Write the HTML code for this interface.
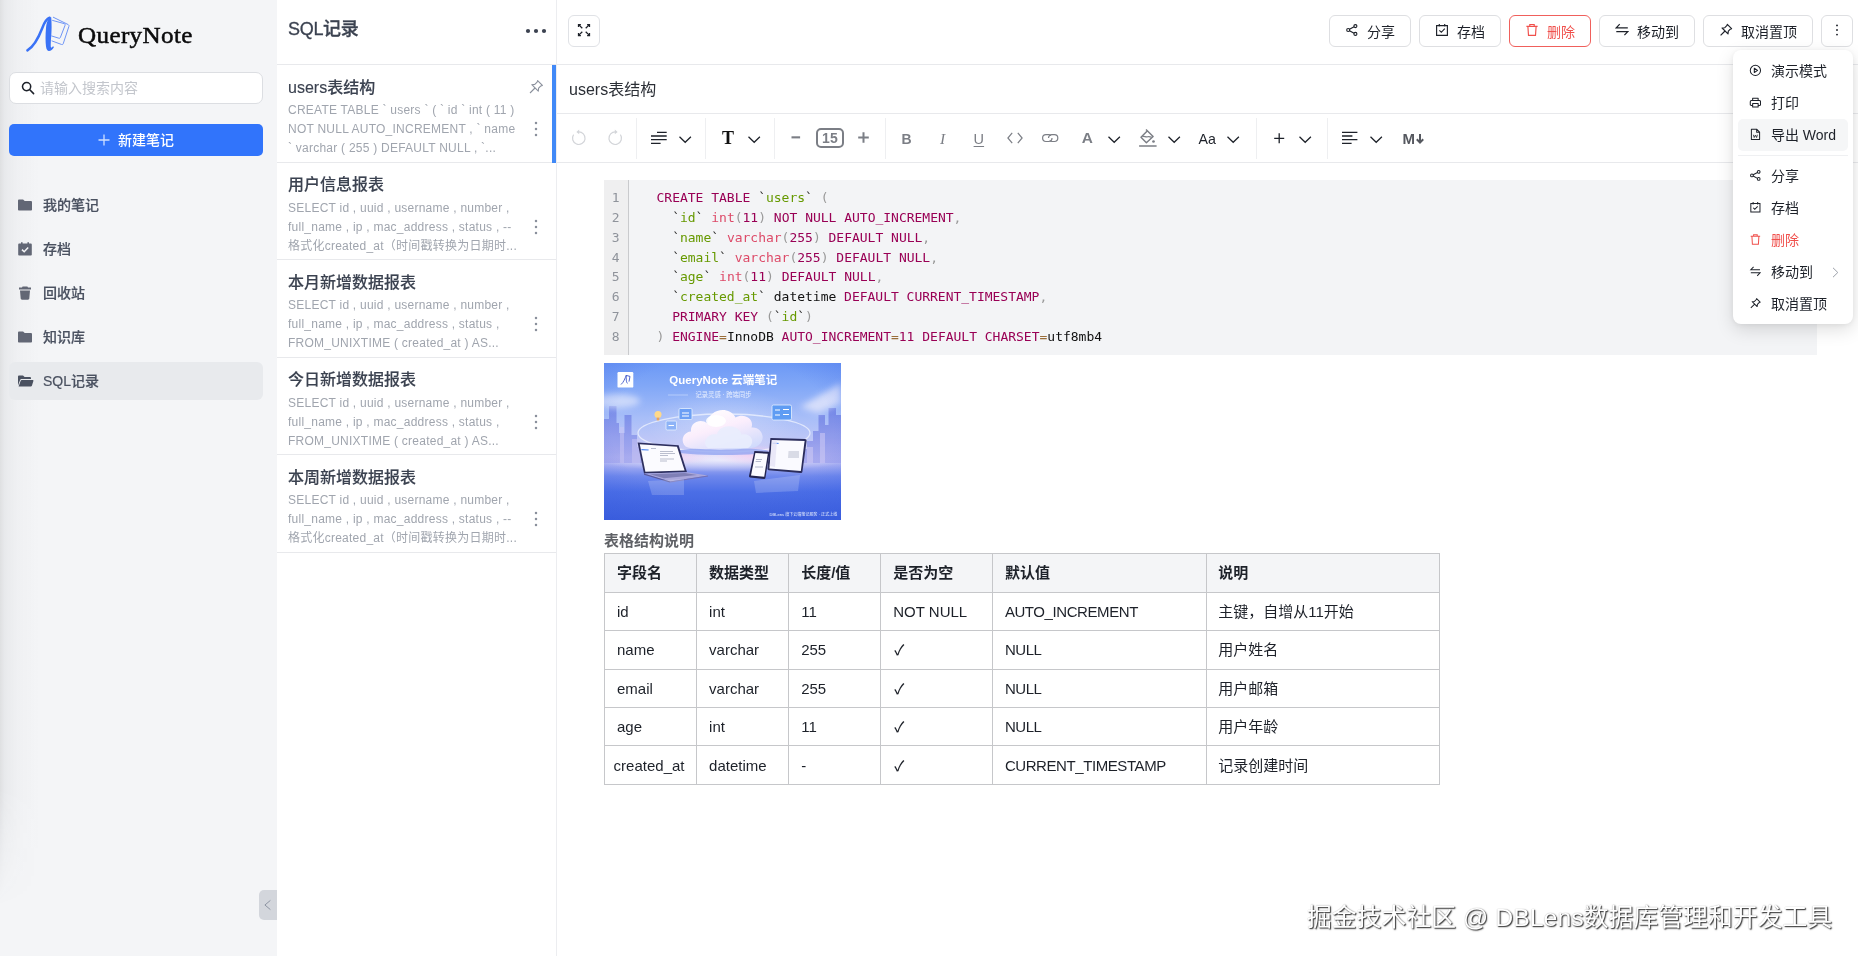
<!DOCTYPE html>
<html lang="zh-CN">
<head>
<meta charset="utf-8">
<title>QueryNote - users表结构</title>
<style>
*{box-sizing:border-box;margin:0;padding:0}
html,body{width:1858px;height:956px;overflow:hidden;background:#fff}
body{font-family:"Liberation Sans","Noto Sans CJK SC",sans-serif;font-size:14px;color:#1d2129;position:relative;-webkit-font-smoothing:antialiased}
svg{display:block}
.app{position:absolute;left:0;top:0;width:1858px;height:956px;display:flex;opacity:.9999}

/* ---------- sidebar ---------- */
.sidebar{position:relative;width:277px;height:956px;flex:none;background:#f4f5f7}
.sidebar .edge{position:absolute;left:0;top:0;width:40px;height:956px;background:linear-gradient(90deg,rgba(60,64,72,.115),rgba(60,64,72,.06) 12%,rgba(60,64,72,.022) 45%,rgba(60,64,72,0));-webkit-mask-image:linear-gradient(180deg,#000 0,#000 790px,transparent 905px);mask-image:linear-gradient(180deg,#000 0,#000 790px,transparent 905px)}
.logo{position:absolute;left:20px;top:8px;height:52px}
.logo .word{position:absolute;left:58px;top:10.9px;font-family:"Liberation Serif","Noto Serif CJK SC",serif;font-weight:400;font-size:24px;line-height:32px;color:#0b0b0c;white-space:nowrap;letter-spacing:.35px;-webkit-text-stroke:.5px #0b0b0c;transform:scaleX(1.045);transform-origin:0 50%}
.search{position:absolute;left:9px;top:72px;width:254px;height:31.5px;border:1px solid #dcdee2;border-radius:7px;background:#fff;display:flex;align-items:center}
.search svg{position:absolute;left:11px;top:8px}
.search span{position:absolute;left:30px;top:1px;line-height:29px;font-size:14px;color:#c3c6cc}
.newbtn{position:absolute;left:9px;top:124px;width:254px;height:32px;border-radius:5px;background:#3174fb;color:#fff;font-size:14px;font-weight:500;display:flex;align-items:center;justify-content:center;padding-bottom:2.6px}
.newbtn svg{margin-right:8px;position:relative;top:1.2px}
.nav{position:absolute;left:9px;top:186px;width:254px;list-style:none}
.nav li{position:relative;height:38px;margin-bottom:6px;border-radius:6px;line-height:38px;padding-left:34px;font-size:14px;font-weight:500;color:#4a5160;-webkit-text-stroke:.2px #4a5160}
.nav li.on{background:#e8eaed}
.nav li svg{position:absolute;left:8px;top:11px}
.collapse{position:absolute;left:259px;top:890px;width:18px;height:30px;border-radius:5px 0 0 5px;background:#d3d6dc}
.collapse svg{position:absolute;left:4px;top:9px}

/* ---------- note list ---------- */
.list{position:relative;width:280px;height:956px;flex:none;background:#fff;border-right:1px solid #ecedf0}
.list-head{height:65px;border-bottom:1px solid #e8e9ec;position:relative}
.list-head h2{position:absolute;left:11px;top:16.2px;font-size:18px;line-height:26px;font-weight:500;color:#3b4250;-webkit-text-stroke:.3px #3b4250;letter-spacing:-.3px}
.list-head .more{position:absolute;left:248px;top:28px}
.item{position:relative;height:97.5px;border-bottom:1px solid #e8e9ec;padding:11px 0 0 11px}
.item.on::after{content:"";position:absolute;right:0;top:0;bottom:-1px;width:4px;background:#4189f7}
.item h3{position:relative;top:.8px;font-size:16px;line-height:22px;font-weight:500;color:#3b4250;white-space:nowrap;-webkit-text-stroke:.12px #3b4250}
.item p{margin-top:3px;width:240px;font-size:12px;line-height:19px;color:#a0a5ae;white-space:nowrap;overflow:hidden;letter-spacing:.24px}
.item p span{display:block}
.item .pin{position:absolute;left:251px;top:14px}
.item .dots{position:absolute;left:257px;top:56px}

/* ---------- editor ---------- */
.main{position:relative;flex:1;height:956px;background:#fff}

.topbar{position:absolute;left:0;top:0;right:0;height:65px;border-bottom:1px solid #e8e9ec}
.ibtn{position:absolute;width:32px;height:32px;border:1px solid #e0e2e6;border-radius:6px;background:#fff;display:flex;align-items:center;justify-content:center}
.expand{left:11px;top:15px}
.expand svg{position:relative;top:-1px}
.actions{position:absolute;right:5px;top:15px;display:flex;gap:8px}
.btn{height:32px;padding-bottom:1px;border:1px solid #dedfe2;border-radius:6px;background:#fff;display:flex;align-items:center;justify-content:center;font-size:14px;color:#1d2129;white-space:nowrap;flex:none}
.btn svg{margin-right:8px;flex:none;position:relative;top:-.6px}
.btn.more svg{margin:0}
.btn.danger{border-color:#f0605c;color:#f0504c}
.titlebar{position:absolute;left:0;top:65px;right:0;height:49px;border-bottom:1px solid #e8e9ec;padding-left:12px;font-size:16px;line-height:50.6px;color:#2b2f36}
.toolbar{position:absolute;left:0;top:114px;right:0;height:49px;border-bottom:1px solid #e8e9ec}
.toolbar .sep{position:absolute;top:4px;width:1px;height:41px;background:#eeeff1}
.content{position:absolute;left:47px;top:180px;width:1213px}
.watermark{position:absolute;left:750px;top:900px;font-size:24.8px;line-height:36px;color:#fff;white-space:nowrap;letter-spacing:.05px;text-shadow:1px 1px 1px rgba(0,0,0,.62),1px 1px 2px rgba(0,0,0,.42),0 0 1px rgba(0,0,0,.3)}

.toolbar .t{position:absolute}
.serifT{font-family:"Liberation Serif",serif;font-weight:700;font-size:18px;line-height:30px;color:#111}
.fsize{width:27.4px;height:20.8px;border:2px solid #7b7e85;border-radius:5px;font-size:14px;font-weight:700;line-height:17px;text-align:center;color:#7b7e85}
.glyph{top:9.6px;line-height:30px;font-size:14px;color:#7b7e85}
.glyph.b{font-weight:700}
.glyph.i{font-family:"Liberation Serif",serif;font-style:italic;font-size:15.5px;width:12px;text-align:center}
.glyph.u{font-size:14.5px;text-decoration:underline;text-underline-offset:1.6px;text-decoration-thickness:1.2px}
.glyph.aa{color:#1d2129;font-size:14.2px}
.glyph.mkd{color:#55585f;font-weight:700;font-size:15px;white-space:nowrap}
.glyph.mkd svg{display:inline-block;vertical-align:-1px;margin-left:.5px}

.code{position:relative;width:1213px;height:174.5px;background:#f3f4f6;display:flex}
.code .ln{list-style:none;width:25px;height:174.5px;border-right:1px solid #c9cacd;padding-top:7.9px;flex:none;background:#efeff0}
.code .ln li{font-family:"DejaVu Sans Mono","Liberation Mono",monospace;font-size:13px;line-height:19.88px;color:#8f939b;text-align:right;padding-right:8.5px}
.code pre{margin:0;padding:7.9px 0 0 27.5px;font-family:"DejaVu Sans Mono","Liberation Mono",monospace;font-size:13px;line-height:19.88px;color:#111;white-space:pre;letter-spacing:-.014px}
.code .k,.code .n{color:#990055}
.code .s{color:#669900}
.code .q{color:#2b2b2b}
.code .p{color:#999}
.code .f{color:#dd4a68}
.code .o{color:#9a6e3a}
.pic{margin-top:8.5px;width:237px;height:157px;overflow:hidden;background:#6f8ff0}
.cap{margin-top:9.7px;padding-bottom:1.2px;font-size:15px;line-height:22px;font-weight:700;color:#5f6166}
.tbl{margin-top:.6px;border-collapse:collapse;table-layout:fixed;width:835.3px;font-size:15px;color:#1d2129}
.tbl th,.tbl td{border:1px solid #c6c7ca;height:38.4px;padding:0 0 0 12px;text-align:left;font-weight:400;white-space:nowrap;overflow:visible}
.tbl th{background:#f4f5f7;font-weight:700;color:#1d2129;padding-bottom:3.6px}
.tbl td.tight{padding-left:8.6px}
.tbl td:nth-child(6){padding-left:11px;padding-bottom:2.2px}
.tbl th:nth-child(6){padding-left:11px}
.tbl td:nth-child(5){letter-spacing:-.42px}
.ck{font-family:"Noto Sans CJK SC",sans-serif;font-size:14.4px;font-weight:500;position:relative;top:-1px;left:1px}

.menu{position:absolute;left:1176px;top:50px;width:120px;height:273.8px;background:#fff;border-radius:8px;padding:5px;box-shadow:0 6px 18px rgba(0,0,0,.13),0 1px 5px rgba(0,0,0,.06)}
.mi{position:relative;height:32px;border-radius:5px;display:flex;align-items:center;padding-left:10px;padding-bottom:1.6px;font-size:14px;color:#1d2129;white-space:nowrap}
.mi svg{margin:0 9.6px 0 .6px;flex:none;position:relative;top:.4px;width:12.8px;height:12.8px}
.mi.hov{background:#f5f6f7}
.mi.red{color:#f0504c}
.mi .arr{position:absolute;right:9px;top:10.6px;margin:0;width:7px;height:11px}
.md{height:1px;margin:4px 0;background:#eff0f2}
</style>
</head>
<body>
<div class="app">

<aside class="sidebar">
  <div class="edge"></div>
  <div class="logo">
    <svg width="60" height="52" viewBox="0 0 60 52" fill="none">
      <g stroke="#6f95f6" stroke-width="1" stroke-linejoin="round">
        <path d="M33 9.1L48.2 16.6Q49.3 17.2 48.9 18.4L43.2 35.8Q42.8 37 41.6 36.5L31.6 32.8"/>
        <path d="M32.2 12.3L44.4 15.7Q45.5 16.1 45.1 17.2L40.3 29.6Q39.9 30.6 38.8 30.2L31.4 27.9"/>
      </g>
      <path d="M7.4 42.4C13.6 38.6 18.2 30.6 22.2 20.2C24.2 14.8 26.4 10.8 29.6 9.8" stroke="#3a72f6" stroke-width="2.5" stroke-linecap="round"/>
      <path d="M31.2 9.2C28.4 9.6 26.6 13.6 26 20C25.4 26.6 25.4 33.6 26 38.6C26.4 41.6 27.4 43 29 43C30.8 43 32.6 41.4 34 38.9L33 38.2C32.2 39.3 31.6 39.8 31.2 39.6C30.7 39.3 30.7 37.6 30.8 35C31 30 31.6 25 31.6 19C31.6 14.6 31.4 11.4 31.2 9.2Z" fill="#3a72f6"/>
    </svg>
    <span class="word">QueryNote</span>
  </div>
  <div class="search">
    <svg width="14" height="14" viewBox="0 0 14 14" fill="none" stroke="#1d2129" stroke-width="1.55" stroke-linecap="round"><circle cx="5.6" cy="5.6" r="4.1"/><path d="M8.8 8.8L12.6 12.6"/></svg>
    <span>请输入搜索内容</span>
  </div>
  <div class="newbtn">
    <svg width="12" height="12" viewBox="0 0 12 12" stroke="#cfe0ff" stroke-width="1.3"><path d="M6 0.5V11.5M0.5 6H11.5"/></svg>新建笔记
  </div>
  <ul class="nav">
    <li><svg width="16" height="16" viewBox="0 0 16 16" fill="#626775"><path d="M1 3.6C1 2.9 1.5 2.4 2.2 2.4H6.1L7.7 4H13.8C14.5 4 15 4.5 15 5.2V12.4C15 13.1 14.5 13.6 13.8 13.6H2.2C1.5 13.6 1 13.1 1 12.4Z"/></svg>我的笔记</li>
    <li><svg width="16" height="16" viewBox="0 0 16 16" fill="#626775"><path d="M4 1.2H5.6V2.4H10.4V1.2H12V2.4H13.6C14.3 2.4 14.8 2.9 14.8 3.6V13.4C14.8 14.1 14.3 14.6 13.6 14.6H2.4C1.7 14.6 1.2 14.1 1.2 13.4V3.6C1.2 2.9 1.7 2.4 2.4 2.4H4Z"/><path d="M5 8.6L7.2 10.8L11.2 6.6" fill="none" stroke="#f4f5f7" stroke-width="1.5"/></svg>存档</li>
    <li><svg width="16" height="16" viewBox="0 0 16 16" fill="#626775"><path d="M5.6 1.4H10.4L11 2.6H14V4.4H2V2.6H5Z"/><path d="M3 5.4H13L12.3 13.6C12.25 14.3 11.7 14.8 11 14.8H5C4.3 14.8 3.75 14.3 3.7 13.6Z"/></svg>回收站</li>
    <li><svg width="16" height="16" viewBox="0 0 16 16" fill="#626775"><path d="M1 3.6C1 2.9 1.5 2.4 2.2 2.4H6.1L7.7 4H13.8C14.5 4 15 4.5 15 5.2V12.4C15 13.1 14.5 13.6 13.8 13.6H2.2C1.5 13.6 1 13.1 1 12.4Z"/></svg>知识库</li>
    <li class="on"><svg width="17" height="16" viewBox="0 0 17 16" fill="#4a5160"><path d="M1 3.6C1 2.9 1.5 2.4 2.2 2.4H6L7.6 4H12.8C13.5 4 14 4.5 14 5.2V6H4.6C3.9 6 3.3 6.4 3.1 7.1L1 12.6Z"/><path d="M4.8 7H15.6C16.2 7 16.6 7.5 16.4 8.1L14.9 12.8C14.7 13.3 14.3 13.6 13.8 13.6H1.6L3.6 7.9C3.8 7.3 4.2 7 4.8 7Z"/></svg>SQL记录</li>
  </ul>
  <div class="collapse"><svg width="9" height="12" viewBox="0 0 9 12" fill="none" stroke="#8e95a3" stroke-width="1"><path d="M7.4 1.4L1.9 6L7.4 10.6"/></svg></div>
</aside>

<section class="list">
  <div class="list-head">
    <h2>SQL记录</h2>
    <svg class="more" width="22" height="6" viewBox="0 0 22 6" fill="#3b4250"><circle cx="3" cy="3" r="2.1"/><circle cx="11" cy="3" r="2.1"/><circle cx="19" cy="3" r="2.1"/></svg>
  </div>
  <article class="item on">
    <h3>users表结构</h3>
    <p><span>CREATE TABLE ` users ` ( ` id ` int ( 11 )</span><span>NOT NULL AUTO_INCREMENT , ` name</span><span>` varchar ( 255 ) DEFAULT NULL , `...</span></p>
    <svg class="pin" width="16" height="16" viewBox="0 0 16 16" fill="none" stroke="#8a909c" stroke-width="1.1" stroke-linejoin="round"><path d="M9.6 1.6L14.4 6.4L12.9 6.9L10.6 9.2L10.3 12.2L3.8 5.7L6.8 5.4L9.1 3.1Z"/><path d="M7 9L2 14"/></svg>
    <svg class="dots" width="4" height="16" viewBox="0 0 4 16" fill="#8a909c"><circle cx="2" cy="2" r="1.25"/><circle cx="2" cy="8" r="1.25"/><circle cx="2" cy="14" r="1.25"/></svg>
  </article>
  <article class="item">
    <h3>用户信息报表</h3>
    <p><span>SELECT id , uuid , username , number ,</span><span>full_name , ip , mac_address , status , --</span><span>格式化created_at（时间戳转换为日期时...</span></p>
    <svg class="dots" width="4" height="16" viewBox="0 0 4 16" fill="#8a909c"><circle cx="2" cy="2" r="1.25"/><circle cx="2" cy="8" r="1.25"/><circle cx="2" cy="14" r="1.25"/></svg>
  </article>
  <article class="item">
    <h3>本月新增数据报表</h3>
    <p><span>SELECT id , uuid , username , number ,</span><span>full_name , ip , mac_address , status ,</span><span>FROM_UNIXTIME ( created_at ) AS...</span></p>
    <svg class="dots" width="4" height="16" viewBox="0 0 4 16" fill="#8a909c"><circle cx="2" cy="2" r="1.25"/><circle cx="2" cy="8" r="1.25"/><circle cx="2" cy="14" r="1.25"/></svg>
  </article>
  <article class="item">
    <h3>今日新增数据报表</h3>
    <p><span>SELECT id , uuid , username , number ,</span><span>full_name , ip , mac_address , status ,</span><span>FROM_UNIXTIME ( created_at ) AS...</span></p>
    <svg class="dots" width="4" height="16" viewBox="0 0 4 16" fill="#8a909c"><circle cx="2" cy="2" r="1.25"/><circle cx="2" cy="8" r="1.25"/><circle cx="2" cy="14" r="1.25"/></svg>
  </article>
  <article class="item">
    <h3>本周新增数据报表</h3>
    <p><span>SELECT id , uuid , username , number ,</span><span>full_name , ip , mac_address , status , --</span><span>格式化created_at（时间戳转换为日期时...</span></p>
    <svg class="dots" width="4" height="16" viewBox="0 0 4 16" fill="#8a909c"><circle cx="2" cy="2" r="1.25"/><circle cx="2" cy="8" r="1.25"/><circle cx="2" cy="14" r="1.25"/></svg>
  </article>
</section>

<main class="main">

  <header class="topbar">
    <div class="ibtn expand"><svg width="14" height="14" viewBox="0 0 14 14" fill="none" stroke="#1d2129" stroke-width="1.25"><path d="M5.3 5.3L1.6 1.6M1.5 3.9V1.5H3.9M8.7 5.3L12.4 1.6M10.1 1.5H12.5V3.9M5.3 8.7L1.6 12.4M1.5 10.1V12.5H3.9M8.7 8.7L12.4 12.4M12.5 10.1V12.5H10.1"/></svg></div>
    <div class="actions">
      <div class="btn" style="width:82px"><svg width="14" height="14" viewBox="0 0 14 14" fill="none" stroke="#1d2129" stroke-width="1.15"><circle cx="3.2" cy="7" r="1.5"/><circle cx="10.4" cy="3.1" r="1.5"/><circle cx="10.4" cy="10.9" r="1.5"/><path d="M4.5 6.3L9.1 3.8M4.5 7.7L9.1 10.2"/></svg>分享</div>
      <div class="btn" style="width:82px"><svg width="14" height="14" viewBox="0 0 14 14" fill="none" stroke="#1d2129" stroke-width="1.15"><path d="M1.6 2.6H12.4V12.4H1.6ZM4.3 1V3.6M9.7 1V3.6M4.4 7.4L6.3 9.3L9.8 5.7"/></svg>存档</div>
      <div class="btn danger" style="width:82px"><svg width="14" height="14" viewBox="0 0 14 14" fill="none" stroke="#f0504c" stroke-width="1.15"><path d="M1.4 3.4H12.6M4.8 3.2V1.5H9.2V3.2M2.9 3.6L3.5 12.4H10.5L11.1 3.6"/></svg>删除</div>
      <div class="btn" style="width:96px"><svg width="14" height="14" viewBox="0 0 14 14" fill="none" stroke="#1d2129" stroke-width="1.15"><path d="M12.8 4.8H1.3L4.7 1.2M1.3 8.6H12.8L9.4 12.2"/></svg>移动到</div>
      <div class="btn" style="width:110px"><svg width="14" height="14" viewBox="0 0 14 14" fill="none" stroke="#1d2129" stroke-width="1.15" stroke-linejoin="round"><path d="M8.3 1.4L12.6 5.7L11.3 6.2L9.3 8.2L9 10.9L3.1 5L5.8 4.7L7.8 2.7ZM6 8L1.6 12.4"/></svg>取消置顶</div>
      <div class="btn more" style="width:32px"><svg width="4" height="12" viewBox="0 0 4 12" fill="#1d2129"><circle cx="2" cy="1.4" r=".95"/><circle cx="2" cy="6" r=".95"/><circle cx="2" cy="10.6" r=".95"/></svg></div>
    </div>
  </header>

  <div class="titlebar">users表结构</div>

  <div class="toolbar">
    <i class="sep" style="left:79px"></i><i class="sep" style="left:148px"></i><i class="sep" style="left:217px"></i><i class="sep" style="left:328px"></i><i class="sep" style="left:699px"></i><i class="sep" style="left:770px"></i>
    
    <svg class="t" style="left:14px;top:14.6px" width="16" height="17" viewBox="0 0 16 17" fill="none" stroke="#d3d5d9" stroke-width="1.2"><path d="M7.2 2.9A6.3 6.3 0 1 1 2.6 5.6"/><path d="M8.2 0.6L5.4 2.9L8.2 5.2Z" fill="#d3d5d9" stroke="none"/></svg>
    <svg class="t" style="left:50px;top:14.6px" width="16" height="17" viewBox="0 0 16 17" fill="none" stroke="#d3d5d9" stroke-width="1.2"><path d="M8.8 2.9A6.3 6.3 0 1 0 13.4 5.6"/><path d="M7.8 0.6L10.6 2.9L7.8 5.2Z" fill="#d3d5d9" stroke="none"/></svg>
    <svg class="t" style="left:94px;top:17px" width="16" height="14" viewBox="0 0 16 14" fill="none" stroke="#1d2129" stroke-width="1.3"><path d="M6 1.3H15.7M0 5H15.7M0 8.6H15.7M0 12.3H9.6"/></svg>
    <svg class="t" style="left:121.6px;top:22.4px" width="13" height="8" viewBox="0 0 13 8" fill="none" stroke="#1d2129" stroke-width="1.25"><path d="M0.5 0.8L6.2 6.3L11.9 0.8"/></svg>
    <span class="t serifT" style="left:165px;top:9.2px">T</span>
    <svg class="t" style="left:190.6px;top:22.4px" width="13" height="8" viewBox="0 0 13 8" fill="none" stroke="#1d2129" stroke-width="1.25"><path d="M0.5 0.8L6.2 6.3L11.9 0.8"/></svg>
    <svg class="t" style="left:234px;top:22px" width="10" height="3" viewBox="0 0 10 3"><rect x="0.5" y="0.3" width="8.6" height="2.1" fill="#7b7e85"/></svg>
    <span class="t fsize" style="left:259.2px;top:13.6px">15</span>
    <svg class="t" style="left:301.4px;top:18.2px" width="11" height="11" viewBox="0 0 11 11"><path d="M5.5 0.2V10.8M0.2 5.5H10.8" stroke="#7b7e85" stroke-width="2" fill="none"/></svg>
    <span class="t glyph b" style="left:344.5px">B</span>
    <span class="t glyph i" style="left:379.6px">I</span>
    <span class="t glyph u" style="left:416.6px">U</span>
    <svg class="t" style="left:450px;top:18px" width="16" height="12" viewBox="0 0 16 12" fill="none" stroke="#7b7e85" stroke-width="1.2"><path d="M5.2 0.9L0.9 6L5.2 11.1M10.8 0.9L15.1 6L10.8 11.1"/></svg>
    <svg class="t" style="left:485.4px;top:20.3px" width="17" height="9" viewBox="0 0 17 9" fill="none" stroke="#7b7e85" stroke-width="1.2"><path d="M8.9 1.6C8.3 1 7.5 0.7 6.6 0.7H4C2.1 0.7 0.6 2.2 0.6 4.1C0.6 6 2.1 7.5 4 7.5H6.6C8.5 7.5 10 6 10 4.1"/><path d="M7.6 6.6C8.2 7.2 9 7.5 9.9 7.5H12.4C14.3 7.5 15.8 6 15.8 4.1C15.8 2.2 14.3 0.7 12.4 0.7H9.9C8 0.7 6.5 2.2 6.5 4.1"/></svg>
    <span class="t glyph b" style="left:524.8px;font-size:15.4px;top:9.4px">A</span>
    <svg class="t" style="left:550.7px;top:22.4px" width="13" height="8" viewBox="0 0 13 8" fill="none" stroke="#1d2129" stroke-width="1.25"><path d="M0.5 0.8L6.2 6.3L11.9 0.8"/></svg>
    <svg class="t" style="left:582px;top:12px" width="18" height="22" viewBox="0 0 18 22" fill="none" stroke="#7b7e85" stroke-width="1.45" stroke-linejoin="round"><path d="M7 3.4L14.1 10.5L7.4 16.7L2 11.3L8.2 5.1"/><path d="M3.4 10.6C5.4 9.6 6.6 11.6 8.6 10.8C10 10.2 11 10.6 12.6 11.2" stroke-width="1.2"/><circle cx="14.5" cy="15.5" r="1.35" fill="#7b7e85" stroke="none"/><path d="M0.1 20H17.6" stroke-width="1.5"/></svg>
    <svg class="t" style="left:610.8px;top:22.4px" width="13" height="8" viewBox="0 0 13 8" fill="none" stroke="#1d2129" stroke-width="1.25"><path d="M0.5 0.8L6.2 6.3L11.9 0.8"/></svg>
    <span class="t glyph aa" style="left:641.6px">Aa</span>
    <svg class="t" style="left:670.3px;top:22.4px" width="13" height="8" viewBox="0 0 13 8" fill="none" stroke="#1d2129" stroke-width="1.25"><path d="M0.5 0.8L6.2 6.3L11.9 0.8"/></svg>
    <svg class="t" style="left:717px;top:18.5px" width="11" height="11" viewBox="0 0 11 11"><path d="M5.2 0.3V10.3M0.2 5.3H10.2" stroke="#1d2129" stroke-width="1.3" fill="none"/></svg>
    <svg class="t" style="left:741.7px;top:22.4px" width="13" height="8" viewBox="0 0 13 8" fill="none" stroke="#1d2129" stroke-width="1.25"><path d="M0.5 0.8L6.2 6.3L11.9 0.8"/></svg>
    <svg class="t" style="left:785.2px;top:17px" width="16" height="14" viewBox="0 0 16 14" fill="none" stroke="#1d2129" stroke-width="1.3"><path d="M0 1.3H15.4M0 5H10.4M0 8.6H15.4M0 12.3H9.6"/></svg>
    <svg class="t" style="left:812.7px;top:22.4px" width="13" height="8" viewBox="0 0 13 8" fill="none" stroke="#1d2129" stroke-width="1.25"><path d="M0.5 0.8L6.2 6.3L11.9 0.8"/></svg>
    <span class="t glyph mkd" style="left:845.6px">M<svg width="8" height="11" viewBox="0 0 8 11" fill="none" stroke="#55585f" stroke-width="2"><path d="M4 0V8.6M0.8 5.2L4 8.6L7.2 5.2"/></svg></span>

  </div>

  <div class="content">
    <div class="code"><ol class="ln"><li>1</li><li>2</li><li>3</li><li>4</li><li>5</li><li>6</li><li>7</li><li>8</li></ol><pre><span class="k">CREATE</span> <span class="k">TABLE</span> <span class="q">`</span><span class="s">users</span><span class="q">`</span> <span class="p">(</span>
  <span class="q">`</span><span class="s">id</span><span class="q">`</span> <span class="f">int</span><span class="p">(</span><span class="n">11</span><span class="p">)</span> <span class="k">NOT</span> <span class="k">NULL</span> <span class="k">AUTO_INCREMENT</span><span class="p">,</span>
  <span class="q">`</span><span class="s">name</span><span class="q">`</span> <span class="f">varchar</span><span class="p">(</span><span class="n">255</span><span class="p">)</span> <span class="k">DEFAULT</span> <span class="k">NULL</span><span class="p">,</span>
  <span class="q">`</span><span class="s">email</span><span class="q">`</span> <span class="f">varchar</span><span class="p">(</span><span class="n">255</span><span class="p">)</span> <span class="k">DEFAULT</span> <span class="k">NULL</span><span class="p">,</span>
  <span class="q">`</span><span class="s">age</span><span class="q">`</span> <span class="f">int</span><span class="p">(</span><span class="n">11</span><span class="p">)</span> <span class="k">DEFAULT</span> <span class="k">NULL</span><span class="p">,</span>
  <span class="q">`</span><span class="s">created_at</span><span class="q">`</span> datetime <span class="k">DEFAULT</span> <span class="k">CURRENT_TIMESTAMP</span><span class="p">,</span>
  <span class="k">PRIMARY</span> <span class="k">KEY</span> <span class="p">(</span><span class="q">`</span><span class="s">id</span><span class="q">`</span><span class="p">)</span>
<span class="p">)</span> <span class="k">ENGINE</span><span class="o">=</span>InnoDB <span class="k">AUTO_INCREMENT</span><span class="o">=</span><span class="n">11</span> <span class="k">DEFAULT</span> <span class="k">CHARSET</span><span class="o">=</span>utf8mb4</pre></div>
    <div class="pic"><svg width="237" height="157" viewBox="0 0 237 157">
      <defs>
        <linearGradient id="sky" x1="0" y1="0" x2="0" y2="1"><stop offset="0" stop-color="#6c99f6"/><stop offset=".15" stop-color="#82a8f7"/><stop offset=".35" stop-color="#a8bef8"/><stop offset=".5" stop-color="#c0c8f7"/><stop offset=".6" stop-color="#d2cdf6"/><stop offset=".655" stop-color="#a3acf2"/><stop offset=".72" stop-color="#6f88ec"/><stop offset=".82" stop-color="#4b6ee6"/><stop offset="1" stop-color="#3b5edb"/></linearGradient>
        <radialGradient id="glow" cx=".5" cy=".5" r=".5"><stop offset="0" stop-color="#fff" stop-opacity=".9"/><stop offset="1" stop-color="#fff" stop-opacity="0"/></radialGradient>
        <radialGradient id="pink" cx=".5" cy=".5" r=".5"><stop offset="0" stop-color="#f7cdf0" stop-opacity=".8"/><stop offset="1" stop-color="#f7cdf0" stop-opacity="0"/></radialGradient>
        <radialGradient id="vig" cx=".5" cy=".42" r=".78"><stop offset=".6" stop-color="#3a5fe4" stop-opacity="0"/><stop offset="1" stop-color="#3659e0" stop-opacity=".36"/></radialGradient>
        <linearGradient id="cl" x1=".2" y1="0" x2=".8" y2="1"><stop offset="0" stop-color="#ffffff"/><stop offset=".45" stop-color="#fbeefc"/><stop offset="1" stop-color="#cfdafc"/></linearGradient>
        <linearGradient id="twr" x1="0" y1="0" x2="0" y2="1"><stop offset="0" stop-color="#6f83e6"/><stop offset="1" stop-color="#a5a8ef"/></linearGradient>
        <filter id="b1" x="-20%" y="-20%" width="140%" height="140%"><feGaussianBlur stdDeviation=".7"/></filter>
        <filter id="b3" x="-30%" y="-30%" width="160%" height="160%"><feGaussianBlur stdDeviation="3"/></filter>
      </defs>
      <rect width="237" height="157" fill="url(#sky)"/>
      <ellipse cx="118" cy="97" rx="125" ry="12" fill="url(#glow)" opacity=".75"/>
      <ellipse cx="120" cy="60" rx="78" ry="36" fill="url(#glow)" opacity=".3"/>
      <ellipse cx="150" cy="92" rx="40" ry="10" fill="url(#pink)"/><ellipse cx="70" cy="94" rx="40" ry="8" fill="url(#pink)" opacity=".7"/>
      <!-- skyline -->
      <g filter="url(#b1)">
        <path d="M0 100V56H5V43H12.5V60H15V70H20.5V52H27.5V72H33V84H38V100Z" fill="url(#twr)" opacity=".85"/>
        <path d="M16 100V64H20V100ZM28 100V76H36V100Z" fill="#c9c4f4" opacity=".55"/>
        <path d="M237 100V52H232V45H224.5V62H221V52H214.5V68H209V78H203V86H197V100Z" fill="url(#twr)" opacity=".9"/>
        <path d="M216 100V70H221V100ZM203 100V84H209V100Z" fill="#d2ccf5" opacity=".55"/>
      </g>
      <!-- top clouds -->
      <g filter="url(#b3)" opacity=".7"><ellipse cx="12" cy="38" rx="24" ry="7" fill="#e2e8fc"/><path d="M196 44L237 20V40L214 50Z" fill="#f0effc"/></g>
      <!-- orbit -->
      <ellipse cx="120" cy="70" rx="86" ry="19" fill="none" stroke="#fff" stroke-opacity=".6" stroke-width="1.3" filter="url(#b1)"/>
      <!-- cloud -->
      <g filter="url(#b1)">
        <ellipse cx="119" cy="88.5" rx="46" ry="3.6" fill="#8fa3f2" opacity=".75"/>
        <path d="M84 84.5C76 82 77 69.5 87 68.5C86 59 97 55 103.5 60.5C104 47 124 41.5 131.5 54.5C140.5 49.5 150.5 56.5 147.5 64.5C158.5 63.5 163.5 78 152.5 83.5C145 87.5 95 87.5 84 84.5Z" fill="url(#cl)"/>
        <path d="M104 85C97 80 104 69 113 71.5C115 60.5 135 60.5 137.5 71.5C148 69.5 152 80.5 144 85Z" fill="#e9edfd" opacity=".9"/>
        <ellipse cx="112" cy="58" rx="10" ry="6" fill="#fff" opacity=".9"/>
      </g>
      <!-- floating cards -->
      <g stroke="#e6f0ff" stroke-width=".8"><rect x="75" y="45.5" width="13" height="11" rx="1.2" fill="#6c9ff4"/><rect x="62" y="58" width="10.5" height="9" rx="1.2" fill="#8db3f7"/><rect x="168" y="42" width="19.5" height="15" rx="1.5" fill="#5f9cf3"/></g>
      <path d="M78 50H85M78 53H85M64.5 62.5H70M171 47H176M179 46.5H185M171 52H176M179 51.5H185" stroke="#fff" stroke-width="1.2"/>
      <path d="M150 52H166" stroke="#fff" stroke-width="1.4" opacity=".7" filter="url(#b1)"/>
      <circle cx="54" cy="51.5" r="3.5" fill="#ffd98a"/><rect x="52.7" y="54.6" width="2.6" height="2.8" fill="#e9a25e"/>
      <!-- laptop -->
      <path d="M33.6 79.4L74.6 82.2L83 109.2L40 110.6Z" fill="#2d2f5e"/>
      <path d="M35.8 81.2L73 83.8L80.6 107.6L41.4 108.8Z" fill="#fbfbff"/>
      <path d="M37.4 86.6L44.6 87" stroke="#4b86f3" stroke-width="1.1"/><path d="M47 85.5H52M56 88.5H69M56 90.5H71M56 92.5H64M56 96H70M56 98H63" stroke="#8f95ad" stroke-width=".6"/>
      <path d="M40 110.6L83 109.2L104 112.6L66 118.4Z" fill="#a9a6da"/><path d="M46 111.2L81 110L93 112L60 115.2Z" fill="#7f7fb6"/><path d="M40 110.6L66 118.4V119.6L40 111.8Z" fill="#5b5a99"/><path d="M66 118.4L104 112.6V113.6L66 119.6Z" fill="#7471b4"/>
      <!-- tablet -->
      <path d="M166.4 75L201 76Q202.8 76.1 202.6 77.8L198.4 108.8Q198.2 110.2 196.6 110L164.6 107.2Q163.2 107 163.4 105.6Z" fill="#2b2d5c"/>
      <path d="M167.8 77L200.6 78L196.8 108L165.4 105.4Z" fill="#fafaff"/>
      <path d="M168.6 80.2L174.6 80.4" stroke="#4b86f3" stroke-width="1"/><path d="M184.5 88H195V95H184Z" fill="#d9dbe6"/><path d="M165.8 103L167.8 77L173 77.2L171 104Z" fill="#e6e3f6" opacity=".8"/>
      <!-- phone -->
      <path d="M150.4 88L164.2 88.8Q165.6 88.9 165.4 90.3L161.4 115Q161.2 116.2 160 116.1L146 114.4Q144.8 114.2 145 113Z" fill="#23244f"/>
      <path d="M151.4 90L163.8 90.8L160.2 113.8L147 112.4Z" fill="#fbfbff"/>
      <path d="M152 96.5H158M151.6 98.5H157M151 104H159" stroke="#9a9fb8" stroke-width=".7"/>
      <!-- reflections -->
      <g opacity=".18" filter="url(#b1)"><path d="M44 118L80 116L80 132L48 132Z" fill="#fff"/><path d="M150 118L196 112L194 128L152 130Z" fill="#fff"/></g>
      <rect width="237" height="157" fill="url(#vig)"/>
      <!-- logo + titles -->
      <rect x="13.5" y="9" width="15.8" height="15.6" rx="1.2" fill="#fff"/>
      <path d="M17 21.5C19.6 19.4 21 15.4 22.4 12C22.2 15.4 22 19.6 23.6 20.4M23 12.6L26 13.4L25 18.6" fill="none" stroke="#3d55c8" stroke-width=".9"/>
      <text x="119.3" y="21.3" text-anchor="middle" font-family="'Liberation Sans','Noto Sans CJK SC',sans-serif" font-weight="700" font-size="11.5" fill="#fff">QueryNote 云端笔记</text>
      <path d="M64 32H84" stroke="#dfe8ff" stroke-width=".5"/>
      <text x="119.5" y="34.1" text-anchor="middle" font-family="'Liberation Sans','Noto Sans CJK SC',sans-serif" font-size="6.3" fill="#eef3ff" opacity=".92">记录灵感 · 跨端同步</text>
      <text x="233.3" y="152.5" text-anchor="end" font-family="'Liberation Sans','Noto Sans CJK SC',sans-serif" font-size="4.05" fill="#e8eeff">DBLens 旗下云端笔记服务 · 正式上线</text>
    </svg></div>
    <h4 class="cap">表格结构说明</h4>
    <table class="tbl"><colgroup><col style="width:92.1px"><col style="width:92.1px"><col style="width:92.1px"><col style="width:111.6px"><col style="width:214.4px"><col style="width:233px"></colgroup><thead><tr><th>字段名</th><th>数据类型</th><th>长度/值</th><th>是否为空</th><th>默认值</th><th>说明</th></tr></thead><tbody><tr><td>id</td><td>int</td><td>11</td><td>NOT NULL</td><td>AUTO_INCREMENT</td><td>主键，自增从11开始</td></tr><tr><td>name</td><td>varchar</td><td>255</td><td><span class="ck">✓</span></td><td>NULL</td><td>用户姓名</td></tr><tr><td>email</td><td>varchar</td><td>255</td><td><span class="ck">✓</span></td><td>NULL</td><td>用户邮箱</td></tr><tr><td>age</td><td>int</td><td>11</td><td><span class="ck">✓</span></td><td>NULL</td><td>用户年龄</td></tr><tr><td class="tight">created_at</td><td>datetime</td><td>-</td><td><span class="ck">✓</span></td><td>CURRENT_TIMESTAMP</td><td>记录创建时间</td></tr></tbody></table>
  </div>

  <div class="menu">
    <div class="mi"><svg width="14" height="14" viewBox="0 0 14 14" fill="none" stroke="#1d2129" stroke-width="1.1" stroke-linejoin="round"><circle cx="7" cy="7" r="5.6"/><path d="M5.8 4.7V9.3L9.4 7Z"/></svg>演示模式</div>
    <div class="mi"><svg width="14" height="14" viewBox="0 0 14 14" fill="none" stroke="#1d2129" stroke-width="1.15" stroke-linejoin="round"><path d="M4 5V2.4H10V5M4 10.4H2.6C1.9 10.4 1.4 9.9 1.4 9.2V6.2C1.4 5.5 1.9 5 2.6 5H11.4C12.1 5 12.6 5.5 12.6 6.2V9.2C12.6 9.9 12.1 10.4 11.4 10.4H10M4 8.2H10V12H4Z"/></svg>打印</div>
    <div class="mi hov"><svg width="14" height="14" viewBox="0 0 14 14" fill="none" stroke="#1d2129" stroke-width="1.1" stroke-linejoin="round"><path d="M2.6 1.4H8.6L11.6 4.4V12.6H2.6ZM8.4 1.6V4.6H11.4"/><path d="M4.8 7.4L5.7 10.4L7 7.8L8.3 10.4L9.2 7.4" stroke-width=".9"/></svg>导出 Word</div>
    <div class="md"></div>
    <div class="mi"><svg width="14" height="14" viewBox="0 0 14 14" fill="none" stroke="#1d2129" stroke-width="1.1"><circle cx="3.2" cy="7" r="1.5"/><circle cx="10.6" cy="3.1" r="1.5"/><circle cx="10.6" cy="10.9" r="1.5"/><path d="M4.5 6.3L9.3 3.8M4.5 7.7L9.3 10.2"/></svg>分享</div>
    <div class="mi"><svg width="14" height="14" viewBox="0 0 14 14" fill="none" stroke="#1d2129" stroke-width="1.1"><path d="M2 2.8H12V12H2ZM4.5 1.2V3.8M9.5 1.2V3.8M4.6 7.4L6.3 9.1L9.5 5.8"/></svg>存档</div>
    <div class="mi red"><svg width="14" height="14" viewBox="0 0 14 14" fill="none" stroke="#f0504c" stroke-width="1.1"><path d="M1.8 3.6H12.2M5 3.4V1.8H9V3.4M3.2 3.8L3.7 12.2H10.3L10.8 3.8"/></svg>删除</div>
    <div class="mi"><svg width="14" height="14" viewBox="0 0 14 14" fill="none" stroke="#1d2129" stroke-width="1.1"><path d="M12 5.2H2L5 2M2 8.6H12L9 11.8"/></svg>移动到<svg class="arr" width="7" height="11" viewBox="0 0 7 11" fill="none" stroke="#9a9fa8" stroke-width="1"><path d="M1 0.8L5.8 5.5L1 10.2"/></svg></div>
    <div class="mi"><svg width="14" height="14" viewBox="0 0 14 14" fill="none" stroke="#1d2129" stroke-width="1.1" stroke-linejoin="round"><path d="M8.3 1.8L12.2 5.7L11 6.2L9.2 8L8.9 10.5L3.5 5.1L6 4.8L7.8 3ZM6.2 7.8L2 12"/></svg>取消置顶</div>
  </div>
  <div class="watermark">掘金技术社区 @ DBLens数据库管理和开发工具</div>

</main>

</div>
</body>
</html>
